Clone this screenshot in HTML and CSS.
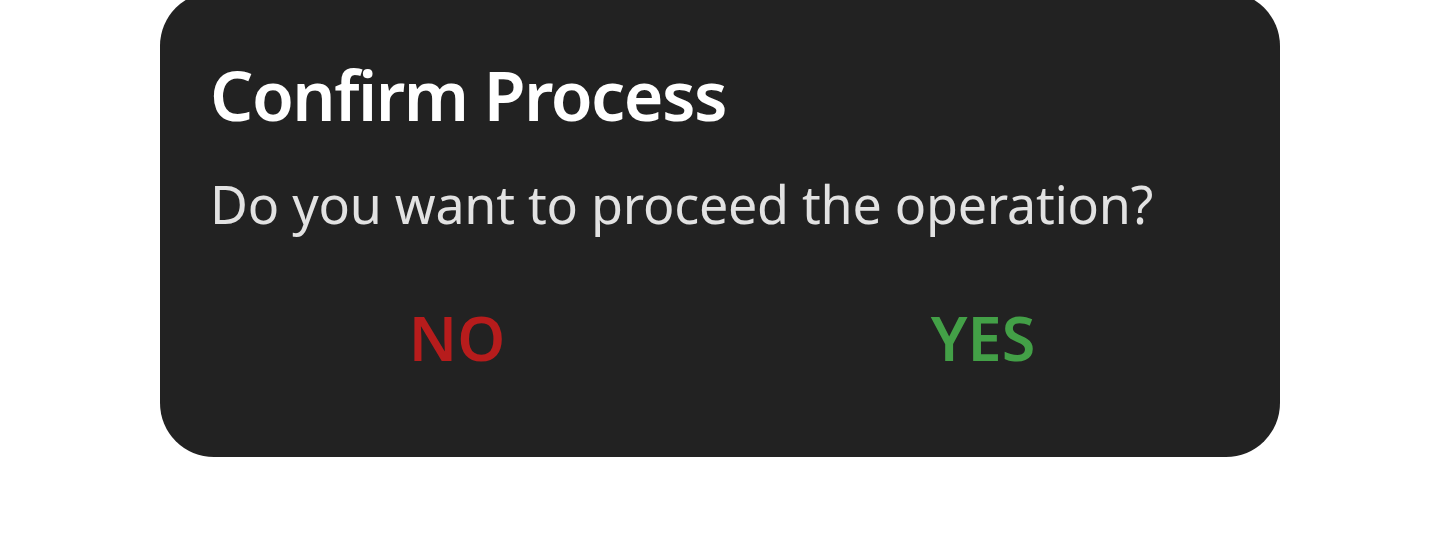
FILE: index.html
```html
<!DOCTYPE html>
<html lang="en">
<head>
<meta charset="utf-8">
<title>Confirm Process</title>
<link rel="stylesheet" href="styles.css">
</head>
<body>
<div class="dialog">
  <h1 class="title">Confirm Process</h1>
  <p class="message">Do you want to proceed the operation?</p>
  <div class="actions">
    <button class="btn btn-no">NO</button>
    <button class="btn btn-yes">YES</button>
  </div>
</div>
</body>
</html>
```
FILE: styles.css
```css
html, body {
  margin: 0;
  padding: 0;
  background: #ffffff;
}
body {
  font-family: "Noto Sans", "Open Sans", sans-serif;
  overflow: hidden;
}
.dialog {
  box-sizing: border-box;
  margin: -8px 160px 0;
  height: 465px;
  background: #222222;
  border-radius: 54px;
  padding: 63px 50px 0;
  display: flex;
  flex-direction: column;
}
.title {
  margin: 0;
  font-size: 68px;
  font-weight: 600;
  line-height: 80px;
  letter-spacing: -1.5px;
  color: #ffffff;
}
.message {
  margin: 34px 0 0;
  font-size: 52px;
  font-weight: 400;
  line-height: 70px;
  letter-spacing: -0.25px;
  color: #e2e2e2;
}
.actions {
  margin-top: 64px;
  display: flex;
  gap: 32px;
}
.btn {
  flex: 1;
  background: none;
  border: 0;
  padding: 0;
  font-family: inherit;
  font-size: 61px;
  font-weight: 560;
  line-height: 70px;
  letter-spacing: 0;
  text-align: center;
}
.btn-no { color: #b71c1c; }
.btn-yes { color: #43a047; }
```
